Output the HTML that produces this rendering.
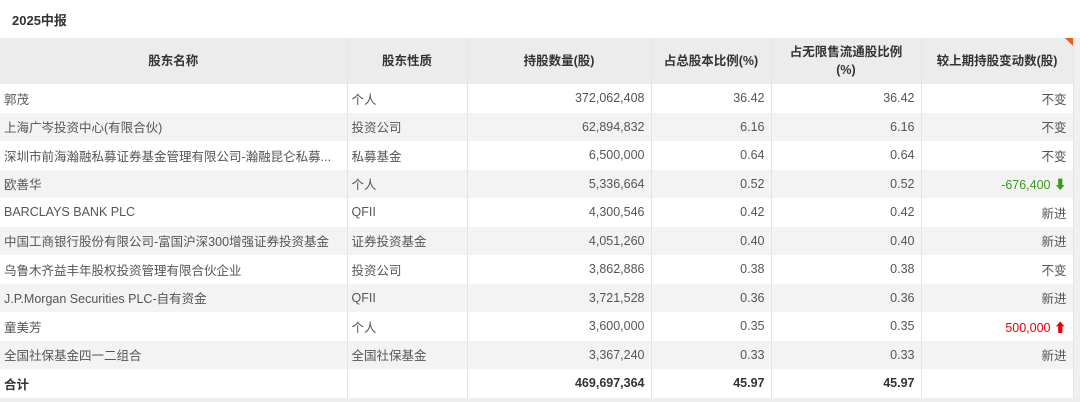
<!DOCTYPE html>
<html><head><meta charset="utf-8"><style>
body{margin:0;background:#fff;font-family:"Liberation Sans","Noto Sans CJK SC",sans-serif;width:1080px;height:402px;overflow:hidden;position:relative}
.title{position:absolute;left:12px;top:10px;font-size:13px;font-weight:bold;color:#333}
table{position:absolute;left:0;top:38px;border-collapse:collapse;table-layout:fixed;width:1073px;font-size:12.5px;color:#555}
td,th{border-right:1px solid #e4e4e4;padding:0 6px;height:28.5px;white-space:nowrap;overflow:hidden;text-overflow:ellipsis}
th{background:#ececec;height:46px;color:#333;font-weight:bold;font-size:12.5px;line-height:18px;position:relative}
tr:nth-child(odd) td{background:#f3f3f3}
td.r{text-align:right}
td.l{text-align:left;padding-left:4px}
tr.tot td{background:#fff;font-weight:bold;color:#333}
.g{color:#3c9a1a}.red{color:#e8000b}
.tri{position:absolute;right:0;top:0;width:0;height:0;border-top:8px solid #f05a1a;border-left:8px solid transparent}
.sb{position:absolute;left:1073px;top:38px;width:7px;height:360px;background:#f0f0f0}
.bot{position:absolute;left:0;top:398px;width:1080px;height:4px;background:#eee}
</style></head><body>
<div class="title">2025中报</div>
<div class="sb"></div>
<table>
<colgroup><col style="width:347px"><col style="width:120px"><col style="width:184px"><col style="width:120px"><col style="width:150px"><col style="width:152px"></colgroup>
<tr><th>股东名称</th><th>股东性质</th><th>持股数量(股)</th><th>占总股本比例(%)</th><th>占无限售流通股比例<br>(%)</th><th>较上期持股变动数(股)<span class="tri"></span></th></tr>
<tr><td class="l">郭茂</td><td class="l">个人</td><td class="r">372,062,408</td><td class="r">36.42</td><td class="r">36.42</td><td class="r">不变</td></tr>
<tr><td class="l">上海广岑投资中心(有限合伙)</td><td class="l">投资公司</td><td class="r">62,894,832</td><td class="r">6.16</td><td class="r">6.16</td><td class="r">不变</td></tr>
<tr><td class="l">深圳市前海瀚融私募证券基金管理有限公司-瀚融昆仑私募...</td><td class="l">私募基金</td><td class="r">6,500,000</td><td class="r">0.64</td><td class="r">0.64</td><td class="r">不变</td></tr>
<tr><td class="l">欧善华</td><td class="l">个人</td><td class="r">5,336,664</td><td class="r">0.52</td><td class="r">0.52</td><td class="r g">-676,400 <b>⬇</b></td></tr>
<tr><td class="l">BARCLAYS BANK PLC</td><td class="l">QFII</td><td class="r">4,300,546</td><td class="r">0.42</td><td class="r">0.42</td><td class="r">新进</td></tr>
<tr><td class="l">中国工商银行股份有限公司-富国沪深300增强证券投资基金</td><td class="l">证券投资基金</td><td class="r">4,051,260</td><td class="r">0.40</td><td class="r">0.40</td><td class="r">新进</td></tr>
<tr><td class="l">乌鲁木齐益丰年股权投资管理有限合伙企业</td><td class="l">投资公司</td><td class="r">3,862,886</td><td class="r">0.38</td><td class="r">0.38</td><td class="r">不变</td></tr>
<tr><td class="l">J.P.Morgan Securities PLC-自有资金</td><td class="l">QFII</td><td class="r">3,721,528</td><td class="r">0.36</td><td class="r">0.36</td><td class="r">新进</td></tr>
<tr><td class="l">童美芳</td><td class="l">个人</td><td class="r">3,600,000</td><td class="r">0.35</td><td class="r">0.35</td><td class="r red">500,000 <b>⬆</b></td></tr>
<tr><td class="l">全国社保基金四一二组合</td><td class="l">全国社保基金</td><td class="r">3,367,240</td><td class="r">0.33</td><td class="r">0.33</td><td class="r">新进</td></tr>
<tr class="tot"><td class="l">合计</td><td></td><td class="r">469,697,364</td><td class="r">45.97</td><td class="r">45.97</td><td></td></tr>
</table>
<div class="bot"></div>
</body></html>
